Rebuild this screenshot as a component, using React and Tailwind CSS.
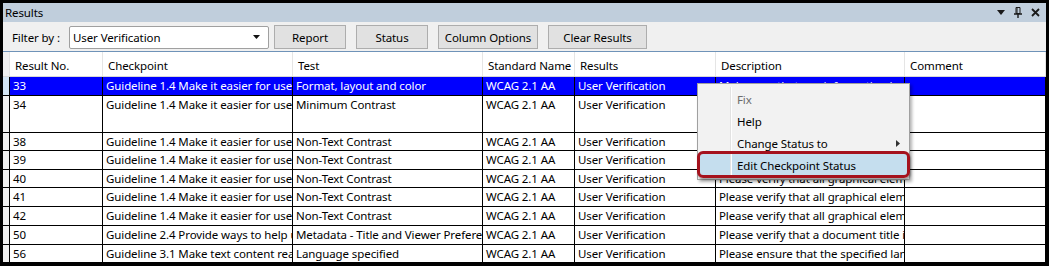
import React from 'react';

const FONT = { fontFamily: '"Noto Sans", "Open Sans", sans-serif' };

const columns = [
  { key: 'no', label: 'Result No.', w: 'w-[93px]' },
  { key: 'checkpoint', label: 'Checkpoint', w: 'w-[190px]' },
  { key: 'test', label: 'Test', w: 'w-[190px]' },
  { key: 'standard', label: 'Standard Name', w: 'w-[92px]' },
  { key: 'result', label: 'Results', w: 'w-[141px]' },
  { key: 'description', label: 'Description', w: 'w-[189px]' },
  { key: 'comment', label: 'Comment', w: 'flex-1' },
];

const G14 = 'Guideline 1.4 Make it easier for users to see and hear content';
const GRAPHIC = 'Please verify that all graphical elements have sufficient contrast';

const rows = [
  { no: '33', checkpoint: G14, test: 'Format, layout and color', description: 'Make sure that any information is not conveyed by color alone', h: 'h-[19px]', selected: true },
  { no: '34', checkpoint: G14, test: 'Minimum Contrast', description: 'Please verify that the text has sufficient contrast', h: 'h-[37px]' },
  { no: '38', checkpoint: G14, test: 'Non-Text Contrast', description: GRAPHIC, h: 'h-[18px]' },
  { no: '39', checkpoint: G14, test: 'Non-Text Contrast', description: GRAPHIC, h: 'h-[19px]' },
  { no: '40', checkpoint: G14, test: 'Non-Text Contrast', description: GRAPHIC, h: 'h-[18px]' },
  { no: '41', checkpoint: G14, test: 'Non-Text Contrast', description: GRAPHIC, h: 'h-[19px]' },
  { no: '42', checkpoint: G14, test: 'Non-Text Contrast', description: GRAPHIC, h: 'h-[19px]' },
  { no: '50', checkpoint: 'Guideline 2.4 Provide ways to help users navigate', test: 'Metadata - Title and Viewer Preferences', description: 'Please verify that a document title is set', h: 'h-[19px]' },
  { no: '56', checkpoint: 'Guideline 3.1 Make text content readable', test: 'Language specified', description: 'Please ensure that the specified language is correct', h: 'h-[18px]' },
];

const ToolButton = ({ label, w }) => (
  <button
    type="button"
    className={`${w} h-[24px] border border-[#adadad] bg-[#e1e1e1] text-black flex items-center justify-center pt-[1px]`}
  >
    {label}
  </button>
);

const ResultRow = ({ row }) => {
  const cellText = row.selected ? 'text-white' : 'text-black';
  return (
    <div className={`flex ${row.h} shrink-0 border-b border-black`}>
      <div className={`w-[6px] shrink-0 ${row.selected ? 'bg-[#d3e5f4]' : 'bg-[#f0f0f0]'}`} />
      <div className={`flex flex-1 border-l border-black ${row.selected ? 'bg-[#0000ff]' : 'bg-white'}`}>
        {columns.map((col) => (
          <div
            key={col.key}
            className={`${col.w} shrink-0 border-r border-black overflow-hidden whitespace-nowrap pl-[3px] pt-[1px] leading-[16px] ${cellText}`}
          >
            {col.key === 'standard' ? 'WCAG 2.1 AA' : col.key === 'result' ? 'User Verification' : row[col.key] || ''}
          </div>
        ))}
      </div>
    </div>
  );
};

const ContextMenu = () => (
  <div className="absolute left-[694px] top-[31px] w-[213px] border border-[#a0a0a0] bg-[#f2f2f2] pt-[4px] pb-[3px] shadow-[2px_2px_3px_rgba(0,0,0,0.3)]">
    <div className="absolute left-[32px] top-[3px] bottom-[3px] w-[2px] border-l border-[#e2e2e2] bg-white" />
    <div className="h-[22px] flex items-center pl-[39px] pt-[1px] text-[#6d6d6d]">Fix</div>
    <div className="h-[22px] flex items-center pl-[39px] pt-[1px]">Help</div>
    <div className="h-[22px] flex items-center justify-between pl-[39px] pr-[9px] pt-[1px]">
      <span>Change Status to</span>
      <svg width="4" height="7" viewBox="0 0 4 7">
        <path d="M0 0 L4 3.5 L0 7 Z" fill="#333" />
      </svg>
    </div>
    <div className="h-[22px] mx-[2px] flex items-center pl-[37px] pt-[1px] bg-[#c5deee]">Edit Checkpoint Status</div>
  </div>
);

export default function App() {
  return (
    <div
      className="w-[1049px] h-[266px] bg-black pt-[3px] px-[3px] pb-[4px] text-[11.5px] tracking-[-0.1px]"
      style={FONT}
    >
      <div className="w-full h-full bg-[#f0f0f0] flex flex-col overflow-hidden relative">
        <div className="h-[19px] shrink-0 bg-[#c0cedc] flex items-center justify-between pl-[2px] pr-[6px]">
          <span className="text-black">Results</span>
          <div className="flex items-center gap-[9px]">
            <svg width="8" height="5" viewBox="0 0 8 5">
              <path d="M0 0 H8 L4 5 Z" fill="#1a1a1a" />
            </svg>
            <svg width="8" height="11" viewBox="0 0 8 11">
              <path d="M2 0.5 H6 V6.5 H2 Z M3 1 V6" stroke="#1a1a1a" strokeWidth="1" fill="none" />
              <path d="M0 7 H8 M4 7 V11" stroke="#1a1a1a" strokeWidth="1.4" fill="none" />
            </svg>
            <svg width="9" height="9" viewBox="0 0 9 9">
              <path d="M1 1 L8 8 M8 1 L1 8" stroke="#1a1a1a" strokeWidth="1.8" />
            </svg>
          </div>
        </div>

        <div className="h-[29px] shrink-0 flex items-center pl-[9px] pt-[1px]">
          <span className="w-[57px] shrink-0 pt-[1px]">Filter by :</span>
          <div className="w-[200px] h-[23px] border border-[#a0a0a0] rounded-[2px] bg-white flex items-center justify-between pl-[3px] pr-[8px]">
            <span className="pt-[1px]">User Verification</span>
            <svg width="7" height="4" viewBox="0 0 7 4">
              <path d="M0 0 H7 L3.5 4 Z" fill="#111" />
            </svg>
          </div>
          <div className="flex items-center gap-[10px] ml-[5px]">
            <ToolButton label="Report" w="w-[72px]" />
            <ToolButton label="Status" w="w-[72px]" />
            <ToolButton label="Column Options" w="w-[100px]" />
            <ToolButton label="Clear Results" w="w-[99px]" />
          </div>
        </div>

        <div className="flex-1 border-t border-[#6f93b8] flex flex-col relative">
          <div className="flex h-[25px] shrink-0 border-b border-[#d8d8d8]">
            <div className="w-[6px] shrink-0 bg-[#f0f0f0]" />
            <div className="flex flex-1 bg-white border-l border-[#e3e3e3]">
              {columns.map((col) => (
                <div
                  key={col.key}
                  className={`${col.w} shrink-0 border-r border-[#e5e5e5] flex items-center pl-[5px] pt-[3px] whitespace-nowrap overflow-hidden`}
                >
                  {col.label}
                </div>
              ))}
            </div>
          </div>
          {rows.map((row) => (
            <ResultRow key={row.no} row={row} />
          ))}
          <ContextMenu />
          <div className="absolute left-[694px] top-[99px] w-[213px] h-[27px] border-[3px] border-[#a5121d] rounded-[6px] shadow-[1px_2px_2px_rgba(0,0,0,0.35)]" />
        </div>
      </div>
    </div>
  );
}
